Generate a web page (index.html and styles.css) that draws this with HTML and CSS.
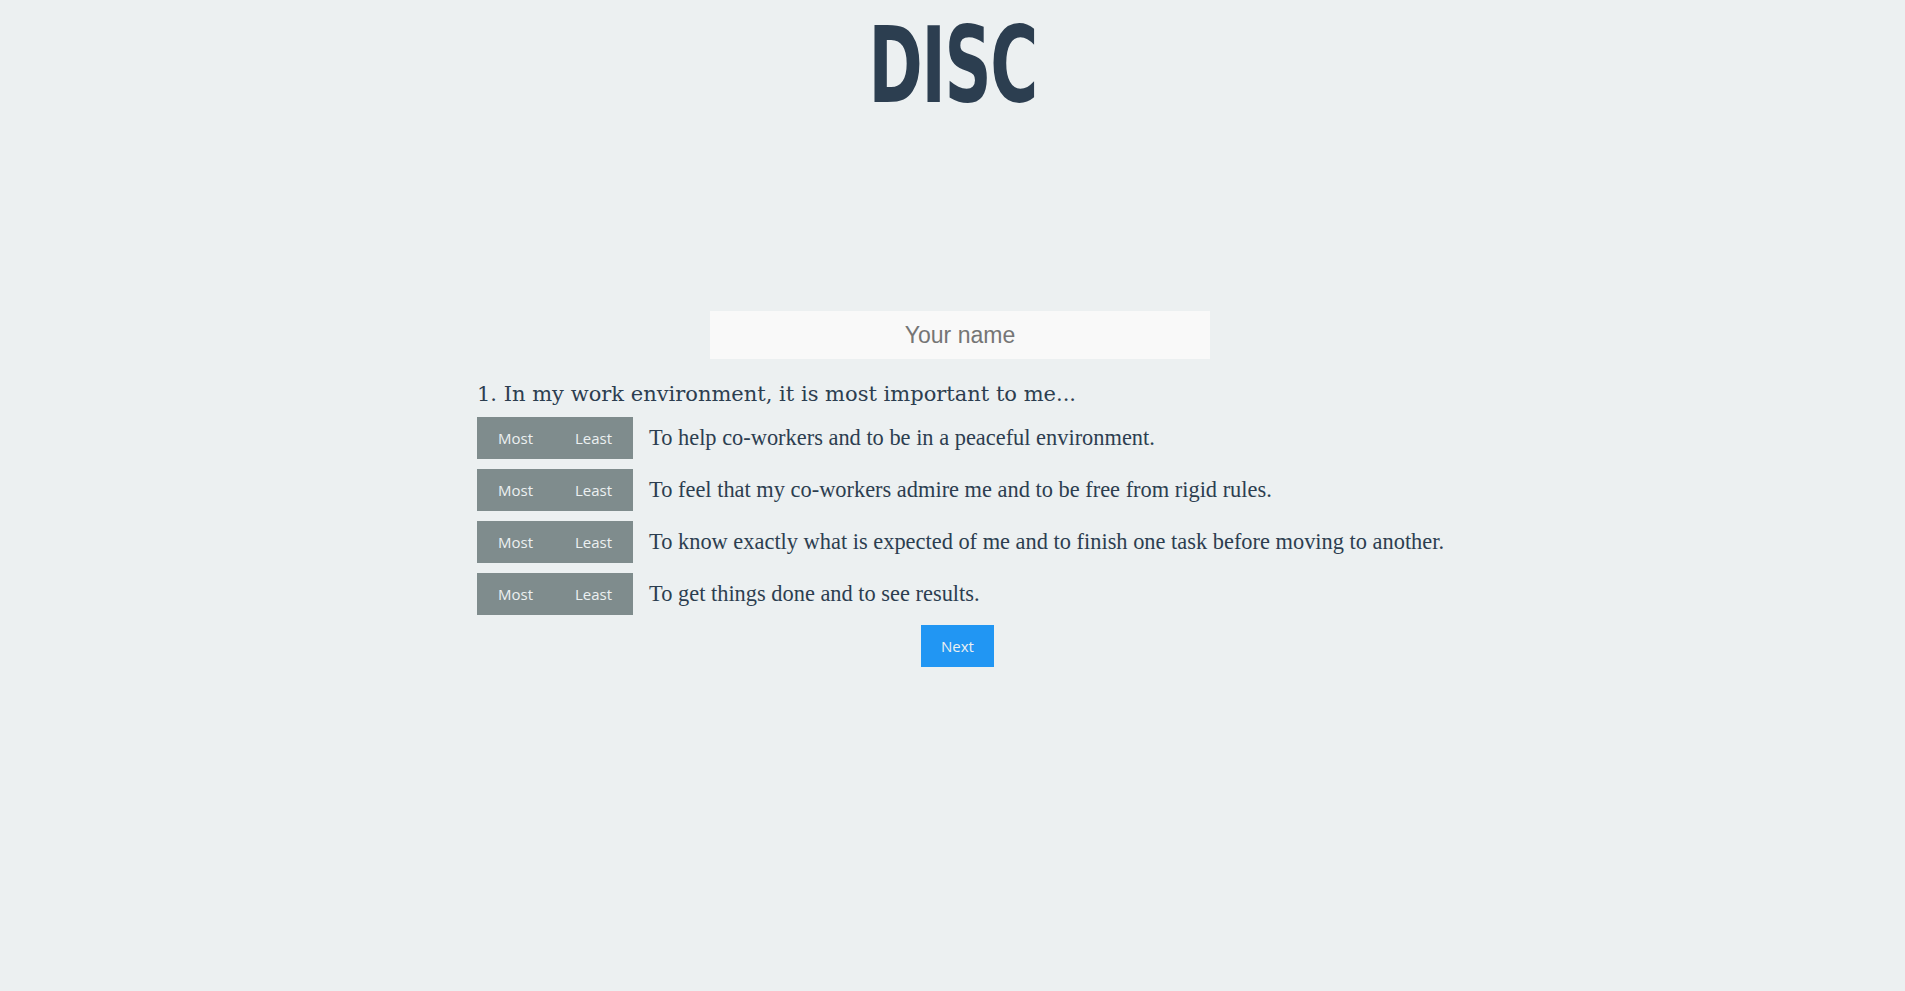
FILE: index.html
```html
<!DOCTYPE html>
<html lang="en">
<head>
<meta charset="utf-8">
<title>DISC</title>
<link rel="stylesheet" href="styles.css">
</head>
<body>
<header class="header">
  <h1 class="title"><span class="title-text">DISC</span></h1>
</header>
<main class="quiz">
  <input class="name-input" type="text" placeholder="Your name">
  <p class="question">1. In my work environment, it is most important to me...</p>
  <div class="option">
    <div class="choice"><span class="choice-label">Most</span><span class="choice-label">Least</span></div>
    <span class="option-text">To help co-workers and to be in a peaceful environment.</span>
  </div>
  <div class="option">
    <div class="choice"><span class="choice-label">Most</span><span class="choice-label">Least</span></div>
    <span class="option-text">To feel that my co-workers admire me and to be free from rigid rules.</span>
  </div>
  <div class="option">
    <div class="choice"><span class="choice-label">Most</span><span class="choice-label">Least</span></div>
    <span class="option-text">To know exactly what is expected of me and to finish one task before moving to another.</span>
  </div>
  <div class="option">
    <div class="choice"><span class="choice-label">Most</span><span class="choice-label">Least</span></div>
    <span class="option-text">To get things done and to see results.</span>
  </div>
  <div class="actions">
    <button class="next-btn" type="button">Next</button>
  </div>
</main>
</body>
</html>
```

FILE: styles.css
```css
html, body {
  margin: 0;
  padding: 0;
}
body {
  background: #ecf0f1;
  color: #2c3e50;
  font-family: "Liberation Serif", serif;
}
.header {
  display: flex;
  justify-content: center;
}
.title {
  margin: 13px 0 0;
  height: 106px;
  font-family: "DejaVu Sans Condensed", "DejaVu Sans", sans-serif;
  font-weight: bold;
  font-size: 106px;
  line-height: 106px;
  color: #2c3e50;
}
.title-text {
  display: inline-block;
  transform: scaleX(0.686);
  letter-spacing: -2px;
}
.quiz {
  width: 966px;
  margin: 0 auto;
  padding-left: 15px;
}
.name-input {
  display: block;
  box-sizing: border-box;
  width: 500px;
  height: 48px;
  margin: 192px auto 0;
  border: none;
  outline: none;
  background: #f9f9f9;
  text-align: center;
  font-family: "Liberation Sans", Arial, sans-serif;
  font-size: 23px;
  color: #555;
}
.name-input::placeholder {
  color: #757575;
}
.question {
  margin: 20px 0 8px;
  font-family: "DejaVu Serif", serif;
  font-size: 21px;
  line-height: 30px;
}
.option {
  display: flex;
  align-items: center;
  gap: 16px;
  margin-bottom: 10px;
}
.choice {
  display: flex;
  background: #7f8c8d;
  height: 42px;
}
.choice-label {
  padding: 0 21px;
  line-height: 42px;
  font-family: "Open Sans", sans-serif;
  font-size: 15px;
  color: #ecf0f1;
}
.option-text {
  font-size: 22.4px;
  line-height: 30px;
  white-space: nowrap;
}
.actions {
  display: flex;
  justify-content: center;
}
.next-btn {
  height: 42px;
  margin-right: 5px;
  padding: 0 20px;
  border: none;
  background: #2196f3;
  color: #ecf0f1;
  font-family: "Open Sans", sans-serif;
  font-size: 15px;
}
```
